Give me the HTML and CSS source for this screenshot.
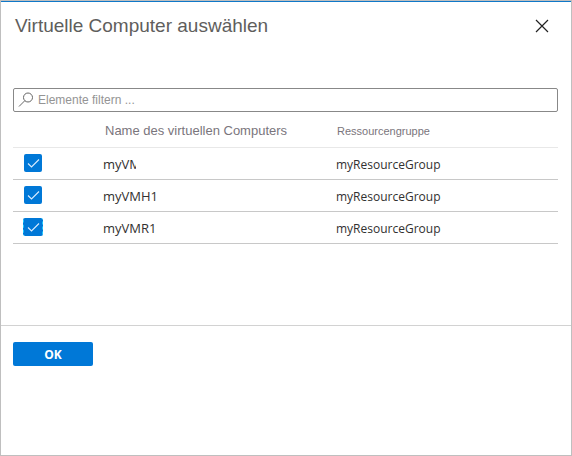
FILE: index.html
```html
<!DOCTYPE html>
<html lang="de">
<head>
<meta charset="utf-8">
<title>Virtuelle Computer auswählen</title>
<link rel="stylesheet" href="styles.css">
</head>
<body>
<main class="panel">
  <header class="panel-header">
    <h1 class="title">Virtuelle Computer auswählen</h1>
    <button class="close" type="button" aria-label="Schließen">
      <svg width="14" height="14" viewBox="0 0 14 14"><path d="M1 1L13 13M13 1L1 13"/></svg>
    </button>
  </header>
  <section class="content">
    <label class="search">
      <svg width="16" height="16" viewBox="0 0 16 16" aria-hidden="true"><circle cx="10" cy="5.5" r="4.5"/><path d="M6.8 8.7L1 14.5"/></svg>
      <input type="text" placeholder="Elemente filtern ..." aria-label="Elemente filtern">
    </label>
    <table class="list">
      <thead>
        <tr>
          <th class="col-check"></th>
          <th class="col-name" scope="col">Name des virtuellen Computers</th>
          <th class="col-group" scope="col">Ressourcengruppe</th>
        </tr>
      </thead>
      <tbody>
        <tr>
          <td><input class="check" type="checkbox" id="vm1" checked></td>
          <td><label class="clipped" for="vm1">myVM</label></td>
          <td class="group">myResourceGroup</td>
        </tr>
        <tr>
          <td><input class="check" type="checkbox" id="vm2" checked></td>
          <td><label for="vm2">myVMH1</label></td>
          <td class="group">myResourceGroup</td>
        </tr>
        <tr>
          <td><input class="check focused" type="checkbox" id="vm3" checked></td>
          <td><label for="vm3">myVMR1</label></td>
          <td class="group">myResourceGroup</td>
        </tr>
      </tbody>
    </table>
  </section>
  <footer class="panel-footer">
    <button class="ok" type="button">OK</button>
  </footer>
</main>
</body>
</html>
```
FILE: styles.css
```css
* {
  box-sizing: border-box;
}

body {
  margin: 0;
  background: #fff;
  color: #323130;
  font-family: "Open Sans", "Noto Sans", sans-serif;
  font-size: 13px;
}

.panel {
  min-height: 100vh;
  border: 1px solid #bfbfbf;
  display: flex;
  flex-direction: column;
}

.panel-header {
  display: flex;
  justify-content: space-between;
  align-items: center;
  height: 49px;
  padding: 0 20px 0 14px;
  border-top: 1px solid #1078c8;
}

.title {
  margin: 0;
  font: 19px "Liberation Sans", sans-serif;
  color: #605e5c;
}

.close {
  display: flex;
  padding: 2px;
  border: 0;
  background: none;
}

.close svg {
  fill: none;
  stroke: #222;
  stroke-width: 1.2;
}

.content {
  padding: 38px 13px 0 12px;
}

.search {
  display: flex;
  align-items: center;
  gap: 4px;
  height: 24px;
  padding: 0 4px;
  border: 1px solid #888;
  border-radius: 2px;
}

.search svg {
  fill: none;
  stroke: #666;
}

.search input {
  flex: 1;
  min-width: 0;
  padding: 0;
  border: 0;
  outline: 0;
  background: none;
  font: 12px "Liberation Sans", sans-serif;
}

.search input::placeholder {
  color: #949494;
}

.list {
  width: 100%;
  border-collapse: separate;
  border-spacing: 0;
  table-layout: fixed;
}

.list th {
  height: 36px;
  padding: 2px 0 0 2px;
  border-bottom: 1px solid #e8e8e8;
  text-align: left;
  font: 13px "Liberation Sans", sans-serif;
  color: #7a757c;
}

.list .col-check {
  width: 90px;
}

.list .col-name {
  width: 233px;
}

.list .col-group {
  padding-left: 1px;
  font-size: 11px;
}

.list td {
  height: 32px;
  padding: 0;
  border-bottom: 1px solid #c8c8c8;
  line-height: 18px;
}

.list .group {
  padding-top: 2px;
  font-size: 12px;
}

.clipped {
  display: block;
  width: 33px;
  overflow: hidden;
}

.check {
  appearance: none;
  display: block;
  width: 18px;
  height: 18px;
  margin: 0 0 2px 11px;
  border-radius: 2px;
  background: #0078d7 url("data:image/svg+xml,%3Csvg xmlns='http://www.w3.org/2000/svg' viewBox='0 0 18 18'%3E%3Cpath d='M4 9.5L7.5 13L15 5.5' fill='none' stroke='%23d8ecff' stroke-width='1.1'/%3E%3C/svg%3E") no-repeat;
}

.check.focused {
  width: 20px;
  margin-left: 10px;
  border: dashed #20c8ff;
  border-width: 0 1px;
}

.panel-footer {
  margin-top: 81px;
  padding: 16px 12px;
  border-top: 1px solid #d2d2d2;
}

.ok {
  display: block;
  width: 80px;
  height: 24px;
  padding: 0;
  border: 0;
  border-radius: 2px;
  background: #0078d7;
  color: #fff;
  font: bold 12px "Open Sans", "Noto Sans", sans-serif;
}
```
